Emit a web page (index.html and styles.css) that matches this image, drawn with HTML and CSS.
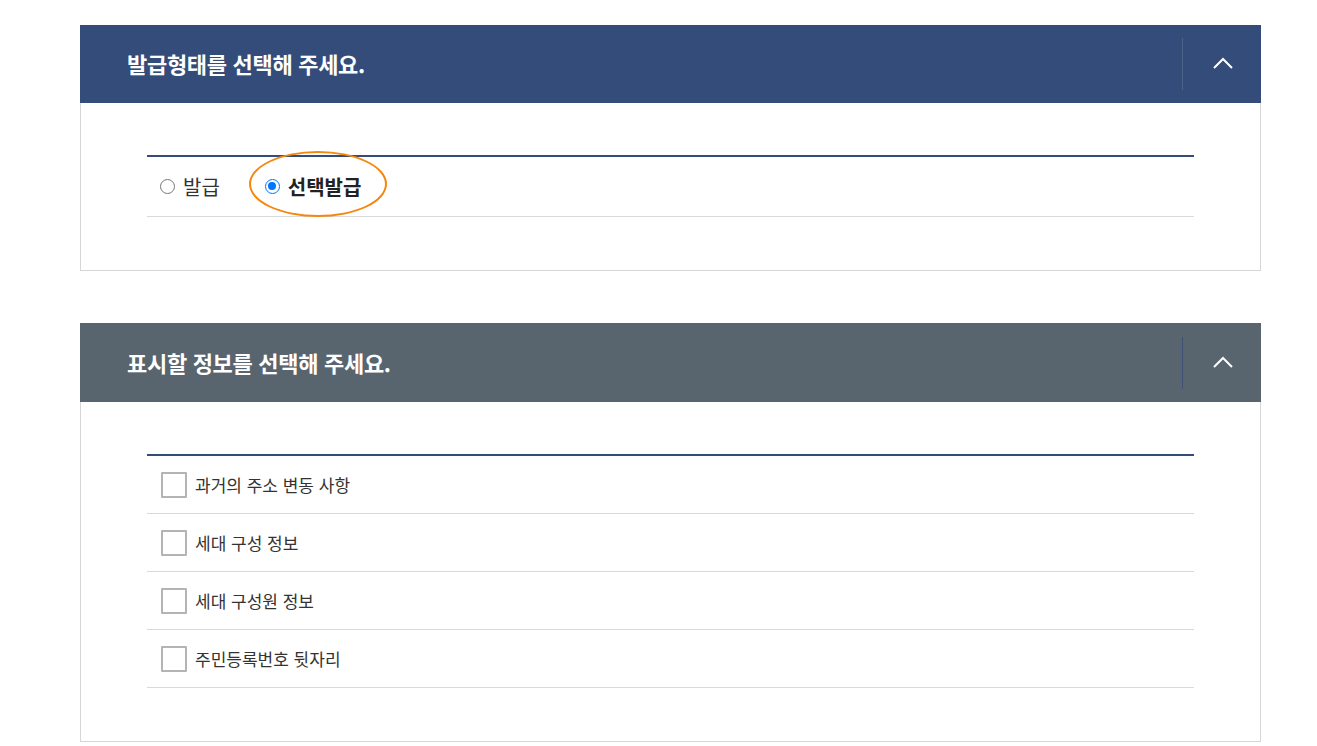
FILE: index.html
```html
<!DOCTYPE html>
<html lang="ko">
<head>
<meta charset="utf-8">
<link rel="stylesheet" href="styles.css">
</head>
<body>
<div class="page">
  <section class="panel">
    <div class="panel-head navy">
      <h2 class="panel-title">발급형태를 선택해 주세요.</h2>
      <button class="toggle">
        <svg width="20" height="12" viewBox="0 0 20 12"><path d="M1 11 L10 2 L19 11" fill="none" stroke="#fff" stroke-width="2"/></svg>
      </button>
    </div>
    <div class="panel-body">
      <div class="opt-table">
        <div class="radio-row">
          <label class="radio"><span class="dot"></span><span class="rlabel">발급</span></label>
          <label class="radio checked"><span class="dot"></span><span class="rlabel">선택발급</span>
            <span class="mark"></span>
          </label>
        </div>
      </div>
    </div>
  </section>

  <section class="panel">
    <div class="panel-head slate">
      <h2 class="panel-title">표시할 정보를 선택해 주세요.</h2>
      <button class="toggle">
        <svg width="20" height="12" viewBox="0 0 20 12"><path d="M1 11 L10 2 L19 11" fill="none" stroke="#fff" stroke-width="2"/></svg>
      </button>
    </div>
    <div class="panel-body">
      <div class="opt-table">
        <label class="check-row"><span class="box"></span><span>과거의 주소 변동 사항</span></label>
        <label class="check-row"><span class="box"></span><span>세대 구성 정보</span></label>
        <label class="check-row"><span class="box"></span><span>세대 구성원 정보</span></label>
        <label class="check-row"><span class="box"></span><span>주민등록번호 뒷자리</span></label>
      </div>
    </div>
  </section>
</div>
</body>
</html>
```
FILE: styles.css
```css
* { box-sizing: border-box; }
html, body { margin: 0; padding: 0; background: #fff; }
body {
  font-family: "Noto Sans CJK KR", "Noto Sans", sans-serif;
  color: #333;
}
.page {
  width: 1181px;
  margin-left: 80px;
  padding-top: 25px;
  display: flex;
  flex-direction: column;
  gap: 52px;
}
.panel { display: flex; flex-direction: column; }
.panel-head {
  height: 78px;
  display: flex;
  align-items: center;
  justify-content: space-between;
  padding-left: 47px;
}
.panel-head.navy { background: #344c79; }
.panel-head.slate { background: #58646e; height: 79px; }
.panel-title {
  margin: 0;
  color: #fff;
  font-size: 22px;
  line-height: 28px;
  font-weight: 700;
  letter-spacing: -0.3px;
  margin-top: -2px;
}
.toggle {
  width: 79px;
  height: 52px;
  border: 0;
  background: transparent;
  display: flex;
  align-items: center;
  justify-content: center;
  padding: 0 0 2px 2px;
  border-left: 1px solid #4d6289;
}
.slate .toggle { border-left-color: #3e5079; }
.panel-body {
  border: 1px solid #d6d6d6;
  border-top: 0;
  padding: 52px 66px 53px 66px;
}
.opt-table {
  border-top: 2px solid #344c79;
}
.radio-row {
  height: 60px;
  border-bottom: 1px solid #d9d9d9;
  display: flex;
  align-items: center;
  padding-left: 13px;
  gap: 45px;
}
.radio {
  position: relative;
  display: flex;
  align-items: center;
  gap: 8px;
  font-size: 20px;
  line-height: 28px;
  color: #333;
}
.dot {
  width: 15px;
  height: 15px;
  border-radius: 50%;
  border: 1px solid #767676;
  background: #fff;
  position: relative;
}
.radio.checked .dot { border: 1.5px solid #0075ff; }
.radio.checked .dot::after {
  content: "";
  position: absolute;
  left: 2px; top: 2px;
  width: 8px; height: 8px;
  border-radius: 50%;
  background: #0075ff;
}
.radio.checked .rlabel { font-weight: 700; color: #222; }
.mark {
  position: absolute;
  left: -16px;
  top: 50%;
  margin-top: -36px;
  width: 138px;
  height: 66px;
  border: 2.5px solid #f5870f;
  border-radius: 50%;
}
.check-row {
  height: 58px;
  border-bottom: 1px solid #d9d9d9;
  display: flex;
  align-items: center;
  padding-left: 14px;
  gap: 8px;
  font-size: 17px;
  color: #333;
}
.box {
  width: 26px;
  height: 26px;
  border: 2px solid #b4b4b4;
  border-radius: 1px;
  background: #fff;
}
```
